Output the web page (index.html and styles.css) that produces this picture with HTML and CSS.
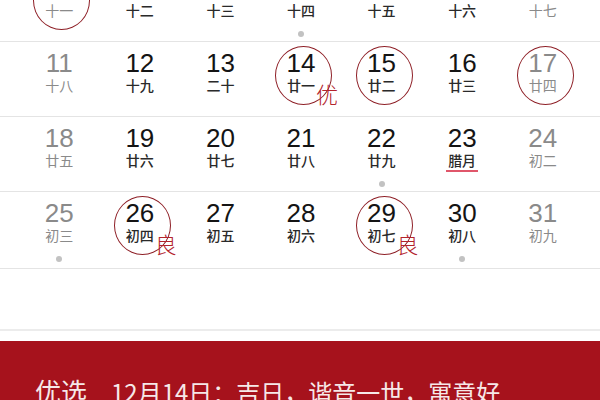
FILE: index.html
```html
<!DOCTYPE html>
<html lang="zh-CN">
<head>
<meta charset="utf-8">
<title>日历</title>
<link rel="stylesheet" href="styles.css">
</head>
<body>
<div class="cal">
  <div class="week">
    <div class="day off"><span class="num">4</span><span class="lunar">十一</span><i class="ring"></i></div>
    <div class="day"><span class="num">5</span><span class="lunar">十二</span></div>
    <div class="day"><span class="num">6</span><span class="lunar">十三</span></div>
    <div class="day"><span class="num">7</span><span class="lunar">十四</span><i class="dot"></i></div>
    <div class="day"><span class="num">8</span><span class="lunar">十五</span></div>
    <div class="day"><span class="num">9</span><span class="lunar">十六</span></div>
    <div class="day off"><span class="num">10</span><span class="lunar">十七</span></div>
  </div>
  <div class="week">
    <div class="day off"><span class="num">11</span><span class="lunar">十八</span></div>
    <div class="day"><span class="num">12</span><span class="lunar">十九</span></div>
    <div class="day"><span class="num">13</span><span class="lunar">二十</span></div>
    <div class="day"><span class="num">14</span><span class="lunar">廿一</span><i class="ring"></i><b class="mark">优</b></div>
    <div class="day"><span class="num">15</span><span class="lunar">廿二</span><i class="ring"></i></div>
    <div class="day"><span class="num">16</span><span class="lunar">廿三</span></div>
    <div class="day off"><span class="num">17</span><span class="lunar">廿四</span><i class="ring"></i></div>
  </div>
  <div class="week">
    <div class="day off"><span class="num">18</span><span class="lunar">廿五</span></div>
    <div class="day"><span class="num">19</span><span class="lunar">廿六</span></div>
    <div class="day"><span class="num">20</span><span class="lunar">廿七</span></div>
    <div class="day"><span class="num">21</span><span class="lunar">廿八</span></div>
    <div class="day"><span class="num">22</span><span class="lunar">廿九</span><i class="dot"></i></div>
    <div class="day"><span class="num">23</span><span class="lunar month">腊月</span></div>
    <div class="day off"><span class="num">24</span><span class="lunar">初二</span></div>
  </div>
  <div class="week">
    <div class="day off"><span class="num">25</span><span class="lunar">初三</span><i class="dot"></i></div>
    <div class="day"><span class="num">26</span><span class="lunar">初四</span><i class="ring"></i><b class="mark">良</b></div>
    <div class="day"><span class="num">27</span><span class="lunar">初五</span></div>
    <div class="day"><span class="num">28</span><span class="lunar">初六</span></div>
    <div class="day"><span class="num">29</span><span class="lunar">初七</span><i class="ring"></i><b class="mark">良</b></div>
    <div class="day"><span class="num">30</span><span class="lunar">初八</span><i class="dot"></i></div>
    <div class="day off"><span class="num">31</span><span class="lunar">初九</span></div>
  </div>
</div>
<div class="spacer"></div>
<div class="band">
  <span class="tag">优选</span>
  <span class="msg">12月14日：吉日，谐音一世，寓意好</span>
</div>
</body>
</html>
```
FILE: styles.css
```css
html, body {
  margin: 0;
  padding: 0;
  background: #ffffff;
  overflow: hidden;
}
body {
  width: 600px;
  height: 400px;
  font-family: "Noto Sans CJK SC", "Noto Sans", sans-serif;
}
.cal {
  margin-top: -33px;
}
.week {
  display: grid;
  grid-template-columns: repeat(7, 1fr);
  padding: 0 17px 0 19px;
  height: 74px;
  border-bottom: 1px solid #e4e4e4;
}
.week:last-child {
  height: 76px;
}
.day {
  position: relative;
  display: flex;
  flex-direction: column;
  align-items: center;
  padding-top: 8px;
  color: #141414;
}
.num {
  font-family: "Liberation Sans", "Noto Sans", sans-serif;
  font-size: 26px;
  line-height: 26px;
}
.lunar {
  margin-top: 2px;
  font-size: 14px;
  line-height: 14px;
  font-weight: 500;
  color: #2a2a2a;
}
.day.off .num,
.day.off .lunar {
  color: #8a8a8a;
}
.day.off .lunar {
  font-weight: 400;
}
.lunar.month {
  padding: 0 2px 3px;
  border-bottom: 2px solid #e0566a;
}
.ring {
  position: absolute;
  top: 4px;
  left: calc(50% - 26px);
  width: 55px;
  height: 57px;
  border: 1.5px solid #8e1f26;
  border-radius: 50%;
}
.dot {
  position: absolute;
  top: 64px;
  left: calc(50% - 3px);
  width: 6px;
  height: 6px;
  border-radius: 50%;
  background: #c2c2c2;
}
.mark {
  position: absolute;
  top: 40px;
  left: calc(50% + 15px);
  font-size: 22px;
  line-height: 22px;
  font-weight: 300;
  color: #b3232c;
}
.spacer {
  height: 60px;
  border-bottom: 2px solid #ececec;
  margin-bottom: 10px;
}
.band {
  display: flex;
  align-items: baseline;
  gap: 24px;
  height: 100px;
  padding: 37px 0 0 35px;
  box-sizing: border-box;
  background: #a6121c;
  color: #f6e8e8;
}
.tag {
  font-size: 26px;
  line-height: 26px;
}
.msg {
  font-size: 24px;
  line-height: 24px;
}
```
